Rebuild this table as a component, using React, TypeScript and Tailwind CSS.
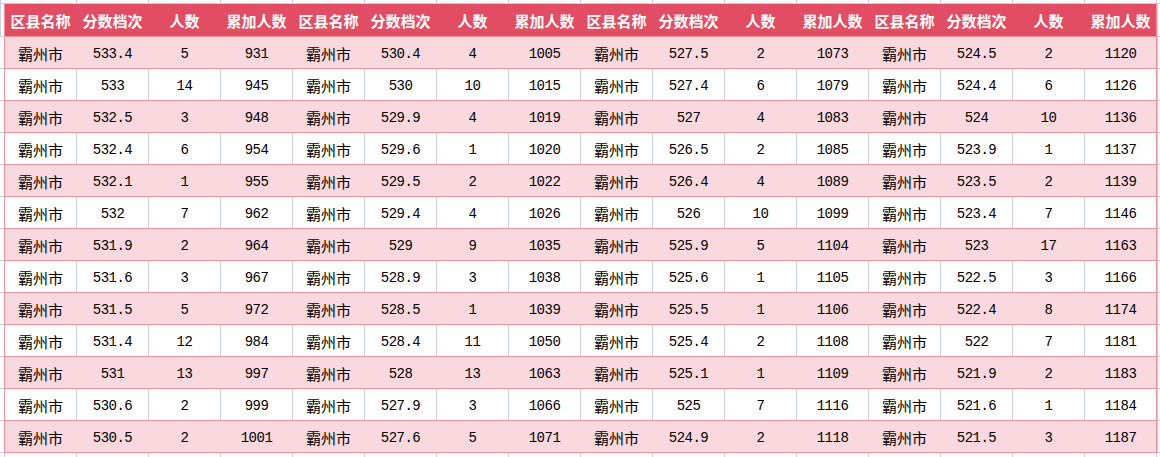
import React from "react";

const groups: [string, number, number][][] = [
  [
    ["533.4", 5, 931],
    ["533", 14, 945],
    ["532.5", 3, 948],
    ["532.4", 6, 954],
    ["532.1", 1, 955],
    ["532", 7, 962],
    ["531.9", 2, 964],
    ["531.6", 3, 967],
    ["531.5", 5, 972],
    ["531.4", 12, 984],
    ["531", 13, 997],
    ["530.6", 2, 999],
    ["530.5", 2, 1001],
  ],
  [
    ["530.4", 4, 1005],
    ["530", 10, 1015],
    ["529.9", 4, 1019],
    ["529.6", 1, 1020],
    ["529.5", 2, 1022],
    ["529.4", 4, 1026],
    ["529", 9, 1035],
    ["528.9", 3, 1038],
    ["528.5", 1, 1039],
    ["528.4", 11, 1050],
    ["528", 13, 1063],
    ["527.9", 3, 1066],
    ["527.6", 5, 1071],
  ],
  [
    ["527.5", 2, 1073],
    ["527.4", 6, 1079],
    ["527", 4, 1083],
    ["526.5", 2, 1085],
    ["526.4", 4, 1089],
    ["526", 10, 1099],
    ["525.9", 5, 1104],
    ["525.6", 1, 1105],
    ["525.5", 1, 1106],
    ["525.4", 2, 1108],
    ["525.1", 1, 1109],
    ["525", 7, 1116],
    ["524.9", 2, 1118],
  ],
  [
    ["524.5", 2, 1120],
    ["524.4", 6, 1126],
    ["524", 10, 1136],
    ["523.9", 1, 1137],
    ["523.5", 2, 1139],
    ["523.4", 7, 1146],
    ["523", 17, 1163],
    ["522.5", 3, 1166],
    ["522.4", 8, 1174],
    ["522", 7, 1181],
    ["521.9", 2, 1183],
    ["521.6", 1, 1184],
    ["521.5", 3, 1187],
  ],
];

const headers = ["区县名称", "分数档次", "人数", "累加人数"];
const cols = Array.from({ length: 16 }, (_, i) => i);

const cjk = "font-['Noto_Sans_CJK_SC',sans-serif]";
const mono = "font-['Liberation_Mono','DejaVu_Sans_Mono',monospace] text-[14px] tracking-[-0.5px]";

function Row({ idx }: { idx: number }) {
  const pink = idx % 2 === 0;
  const cells: { text: string; cn: boolean }[] = [];
  groups.forEach((g) => {
    const r = g[idx];
    cells.push({ text: "霸州市", cn: true });
    cells.push({ text: r[0], cn: false });
    cells.push({ text: String(r[1]), cn: false });
    cells.push({ text: String(r[2]), cn: false });
  });
  return (
    <div className="flex h-[32px]">
      <div className="w-[4px] shrink-0 border-b border-[#c9cde3]" />
      <div
        className={`flex border-l border-b border-[#f0919e] ${
          pink ? "bg-[#f9d8de]" : "bg-white"
        }`}
      >
        {cells.map((c, i) => (
          <div
            key={i}
            className={`w-[72px] shrink-0 flex items-center justify-center pt-[3px] text-black border-r ${
              i === 15
                ? "border-[#f0919e]"
                : pink
                ? "border-[#f9d8de]"
                : "border-[#c9cde3]"
            } ${c.cn ? `${cjk} text-[15px]` : mono}`}
          >
            {c.text}
          </div>
        ))}
      </div>
      <div className="flex-1 border-l border-b border-[#c9cde3]" />
    </div>
  );
}

export default function App() {
  return (
    <div className="w-[1160px] h-[457px] overflow-hidden bg-white flex flex-col">
      {/* top margin strip */}
      <div className="flex h-[4px] shrink-0 border-b border-[#c9cde3]">
        <div className="w-[5px] shrink-0 border-l border-[#c9cde3]" />
        {cols.map((i) => (
          <div key={i} className="w-[72px] shrink-0 border-r border-[#c9cde3]" />
        ))}
        <div className="flex-1" />
      </div>
      {/* header */}
      <div className="flex h-[33px] shrink-0">
        <div className="w-[4px] shrink-0 border-b border-[#c9cde3] border-l" />
        <div className="flex bg-[#e34d63] border-l border-b border-[#f0919e]">
          {cols.map((i) => (
            <div
              key={i}
              className={`w-[72px] shrink-0 flex items-center justify-center pt-[3px] text-white font-bold text-[15px] ${cjk} border-r ${
                i === 15 ? "border-[#f0919e]" : "border-[#e34d63]"
              }`}
            >
              {headers[i % 4]}
            </div>
          ))}
        </div>
        <div className="flex-1 border-l border-b border-[#c9cde3]" />
      </div>
      {groups[0].map((_, idx) => (
        <Row key={idx} idx={idx} />
      ))}
      {/* bottom margin strip */}
      <div className="flex flex-1">
        <div className="w-[5px] shrink-0 border-r border-[#c9cde3]" />
        {cols.map((i) => (
          <div key={i} className="w-[72px] shrink-0 border-r border-[#c9cde3]" />
        ))}
        <div className="flex-1" />
      </div>
    </div>
  );
}
